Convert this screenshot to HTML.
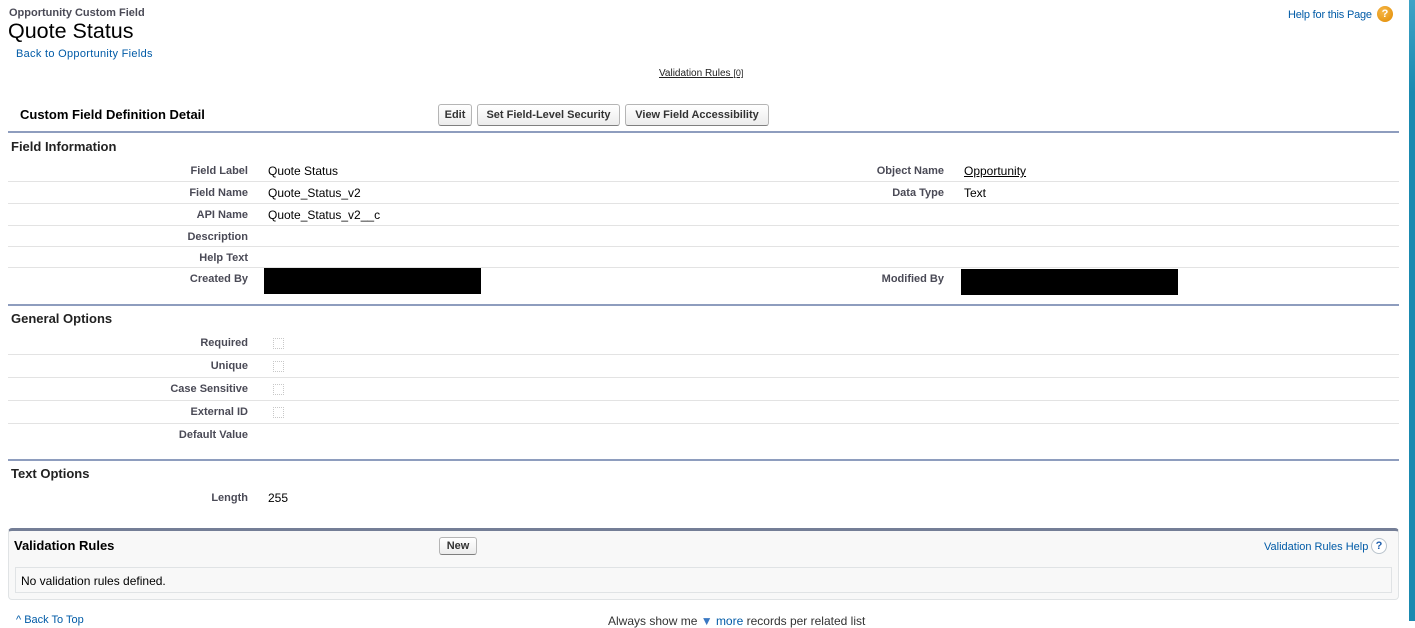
<!DOCTYPE html>
<html><head><meta charset="utf-8"><style>
*{margin:0;padding:0;box-sizing:border-box}
body{width:1415px;height:621px;overflow:hidden;background:#fff;font-family:"Liberation Sans",Arial,sans-serif;position:relative;color:#000}
.a{position:absolute;white-space:nowrap}
.lb{position:absolute;font-size:11px;font-weight:bold;color:#4a4a56;text-align:right;white-space:nowrap}
.v{position:absolute;font-size:12px;white-space:nowrap}
.sep{position:absolute;left:8px;width:1391px;height:1px;background:#e3e3e3}
.hl{position:absolute;left:8px;width:1391px;height:2px;background:#8e9dbe}
.sec{position:absolute;left:11px;font-size:13px;font-weight:bold;color:#222}
.btn{position:absolute;height:22px;border:1px solid #b5b5b5;border-bottom-color:#7f7f7f;border-radius:3px;background:linear-gradient(#fff,#ececec);font-size:11px;font-weight:bold;color:#333;line-height:20px;text-align:center}
.cb{position:absolute;left:273px;width:11px;height:11px;border:1px dotted #c8c8c8}
</style></head><body>
<div class="a" style="left:9px;top:7px;font-size:11px;font-weight:bold;color:#4a4a56">Opportunity Custom Field</div>
<div class="a" style="left:8px;top:19px;font-size:21.5px;color:#000">Quote Status</div>
<div class="a" style="left:16px;top:48px;font-size:11px;color:#015ba7;letter-spacing:.3px">Back to Opportunity Fields</div>
<div class="a" style="left:1288px;top:9px;font-size:11px;color:#015ba7;letter-spacing:-.2px">Help for this Page</div>
<div class="a" style="left:1377px;top:6px;width:16px;height:16px;border-radius:50%;background:radial-gradient(circle at 40% 35%,#f7b84a,#e08a00);color:#fff;font-size:11px;font-weight:bold;text-align:center;line-height:16px">?</div>
<div style="position:absolute;left:1409px;top:0;width:6px;height:621px;background:linear-gradient(#3fa3c6,#1a8ab0 15%)"></div>
<div class="a" style="left:659px;top:68px;font-size:10px;color:#222;text-decoration:underline">Validation Rules <span style="font-size:9px">[0]</span></div>

<div class="a" style="left:20px;top:107px;font-size:13px;font-weight:bold">Custom Field Definition Detail</div>
<div class="btn" style="left:438px;top:104px;width:34px">Edit</div>
<div class="btn" style="left:477px;top:104px;width:143px">Set Field-Level Security</div>
<div class="btn" style="left:625px;top:104px;width:144px">View Field Accessibility</div>
<div class="hl" style="top:131px"></div>
<div class="sec" style="top:139px">Field Information</div>

<div class="lb" style="right:1167px;top:165px">Field Label</div><div class="v" style="left:268px;top:164px">Quote Status</div>
<div class="lb" style="right:471px;top:165px">Object Name</div><div class="v" style="left:964px;top:164px;text-decoration:underline">Opportunity</div>
<div class="sep" style="top:181px"></div>
<div class="lb" style="right:1167px;top:187px">Field Name</div><div class="v" style="left:268px;top:186px">Quote_Status_v2</div>
<div class="lb" style="right:471px;top:187px">Data Type</div><div class="v" style="left:964px;top:186px">Text</div>
<div class="sep" style="top:203px"></div>
<div class="lb" style="right:1167px;top:209px">API Name</div><div class="v" style="left:268px;top:208px">Quote_Status_v2__c</div>
<div class="sep" style="top:225px"></div>
<div class="lb" style="right:1167px;top:231px">Description</div>
<div class="sep" style="top:246px"></div>
<div class="lb" style="right:1167px;top:252px">Help Text</div>
<div class="sep" style="top:267px"></div>
<div class="lb" style="right:1167px;top:273px">Created By</div>
<div class="a" style="left:264px;top:268px;width:217px;height:26px;background:#000"></div>
<div class="lb" style="right:471px;top:273px">Modified By</div>
<div class="a" style="left:961px;top:269px;width:217px;height:26px;background:#000"></div>
<div class="hl" style="top:304px"></div>

<div class="sec" style="top:311px">General Options</div>
<div class="lb" style="right:1167px;top:337px">Required</div><div class="cb" style="top:338px"></div>
<div class="sep" style="top:354px"></div>
<div class="lb" style="right:1167px;top:360px">Unique</div><div class="cb" style="top:361px"></div>
<div class="sep" style="top:377px"></div>
<div class="lb" style="right:1167px;top:383px">Case Sensitive</div><div class="cb" style="top:384px"></div>
<div class="sep" style="top:400px"></div>
<div class="lb" style="right:1167px;top:406px">External ID</div><div class="cb" style="top:407px"></div>
<div class="sep" style="top:423px"></div>
<div class="lb" style="right:1167px;top:429px">Default Value</div>
<div class="hl" style="top:459px"></div>

<div class="sec" style="top:466px">Text Options</div>
<div class="lb" style="right:1167px;top:492px">Length</div><div class="v" style="left:268px;top:491px">255</div>

<div class="a" style="left:8px;top:528px;width:1391px;height:72px;background:#f8f8f8;border:1px solid #e0e3e5;border-top:3px solid #747e96;border-radius:4px"></div>
<div class="a" style="left:14px;top:538px;font-size:13px;font-weight:bold">Validation Rules</div>
<div class="btn" style="left:439px;top:537px;width:38px;height:18px;line-height:16px">New</div>
<div class="a" style="left:1264px;top:541px;font-size:11px;color:#015ba7">Validation Rules Help</div>
<div class="a" style="left:1371px;top:538px;width:16px;height:16px;border-radius:50%;border:1px solid #b9c3cc;background:#fff;color:#1f5fad;font-size:11px;font-weight:bold;text-align:center;line-height:14px">?</div>
<div class="a" style="left:15px;top:567px;width:1377px;height:26px;background:#f8f8f8;border:1px solid #e0e3e5"></div>
<div class="a" style="left:21px;top:574px;font-size:12px">No validation rules defined.</div>

<div class="a" style="left:16px;top:614px;font-size:11px;color:#015ba7">^ Back To Top</div>
<div class="a" style="left:608px;top:614px;font-size:12px;color:#333">Always show me <span style="color:#3a78c3">▼</span> <span style="color:#015ba7">more</span> records per related list</div>
</body></html>
